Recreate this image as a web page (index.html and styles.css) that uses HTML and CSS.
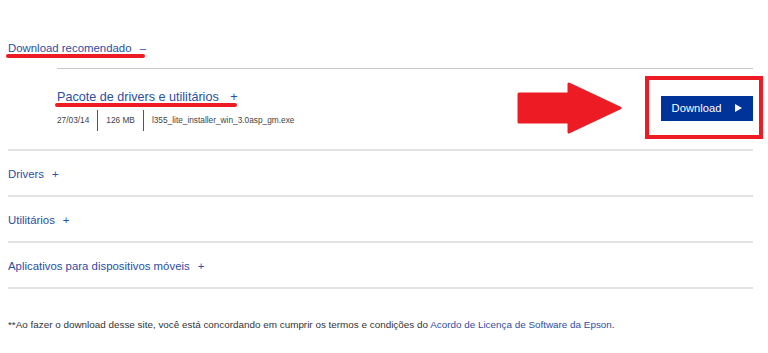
FILE: index.html
```html
<!DOCTYPE html>
<html lang="pt-BR">
<head>
    <meta charset="UTF-8">
    <meta name="viewport" content="width=device-width, initial-scale=1.0">
    <title>Downloads</title>
    <link rel="stylesheet" href="styles.css">
</head>
<body>
    <div class="downloads">
        <!-- Recommended download -->
        <div class="recommended">
            <div class="section-title">Download recomendado <span class="toggle">&ndash;</span></div>
            <div class="package">
                <div class="package-info">
                    <div class="package-title">Pacote de drivers e utilitários <span class="toggle">+</span></div>
                    <div class="meta">
                        <span class="meta-item">27/03/14</span>
                        <span class="meta-item">126 MB</span>
                        <span class="meta-item">l355_lite_installer_win_3.0asp_gm.exe</span>
                    </div>
                </div>
                <div class="button">Download <span class="play"></span></div>
            </div>
        </div>

        <!-- Other categories -->
        <div class="category">Drivers <span class="toggle">+</span></div>
        <div class="category">Utilitários <span class="toggle">+</span></div>
        <div class="category">Aplicativos para dispositivos móveis <span class="toggle">+</span></div>

        <p class="note">**Ao fazer o download desse site, você está concordando em cumprir os termos e condições do <a href="#">Acordo de Licença de Software da Epson</a>.</p>

        <!-- Annotations drawn over the page -->
        <div class="mark mark-title"></div>
        <div class="mark mark-package"></div>
        <svg class="arrow" width="108" height="52" viewBox="0 0 108 52">
            <path d="M3 12 H53 V2 L104 26 L53 50 V40 H3 Z" fill="#ed1c24" stroke="#ed1c24" stroke-width="3" stroke-linejoin="round"/>
        </svg>
        <div class="frame"></div>
    </div>
</body>
</html>
```

FILE: styles.css
```css
body {
    margin: 0;
    background: #ffffff;
    font-family: "Liberation Sans", Arial, sans-serif;
    color: #333333;
}

.downloads {
    position: relative;
    width: 745px;
    padding: 41px 0 0 8px;
}

.toggle {
    margin-left: 5px;
}

.recommended {
    border-bottom: 2px solid #e3e3e3;
}

.section-title {
    font-size: 11.4px;
    line-height: 14px;
    color: #2d4d9f;
    margin-bottom: 13px;
}

.package {
    margin-left: 49px;
    border-top: 1px solid #c9c9c3;
    padding: 20px 0 18px 0;
    display: flex;
    justify-content: space-between;
    align-items: center;
}

.package-title {
    font-size: 12.6px;
    line-height: 16px;
    color: #2d4d9f;
}

.package-title .toggle {
    margin-left: 8px;
}

.meta {
    display: flex;
    margin-top: 5px;
    font-size: 8.3px;
    line-height: 21px;
    color: #444444;
}

.meta-item {
    padding: 0 8px;
    border-left: 1px solid #555555;
}

.meta-item:first-child {
    padding-left: 0;
    border-left: none;
}

.button {
    display: flex;
    align-items: center;
    justify-content: center;
    gap: 14px;
    width: 92px;
    height: 25px;
    margin-top: -4px;
    background: #003399;
    color: #ffffff;
    font-size: 11.2px;
}

.play {
    width: 0;
    height: 0;
    border-top: 4px solid transparent;
    border-bottom: 4px solid transparent;
    border-left: 7px solid #ffffff;
}

.category {
    box-sizing: border-box;
    height: 46px;
    padding-top: 2px;
    display: flex;
    align-items: center;
    border-bottom: 2px solid #e3e3e3;
    font-size: 11.4px;
    color: #2d4d9f;
}

.category .toggle {
    margin-left: 8px;
}

.note {
    margin: 30px 0 0 0;
    font-size: 9.9px;
    line-height: 12px;
    color: #333333;
}

.note a {
    color: #2d4d9f;
    text-decoration: none;
}

.mark {
    position: absolute;
    height: 4px;
    border-radius: 2px;
    background: #ed1c24;
}

.mark-title {
    left: 6px;
    top: 54px;
    width: 139px;
}

.mark-package {
    left: 55px;
    top: 103px;
    width: 182px;
}

.arrow {
    position: absolute;
    left: 516px;
    top: 82px;
}

.frame {
    position: absolute;
    left: 645px;
    top: 76px;
    width: 118px;
    height: 63px;
    box-sizing: border-box;
    border: 4px solid #ed1c24;
}
```
